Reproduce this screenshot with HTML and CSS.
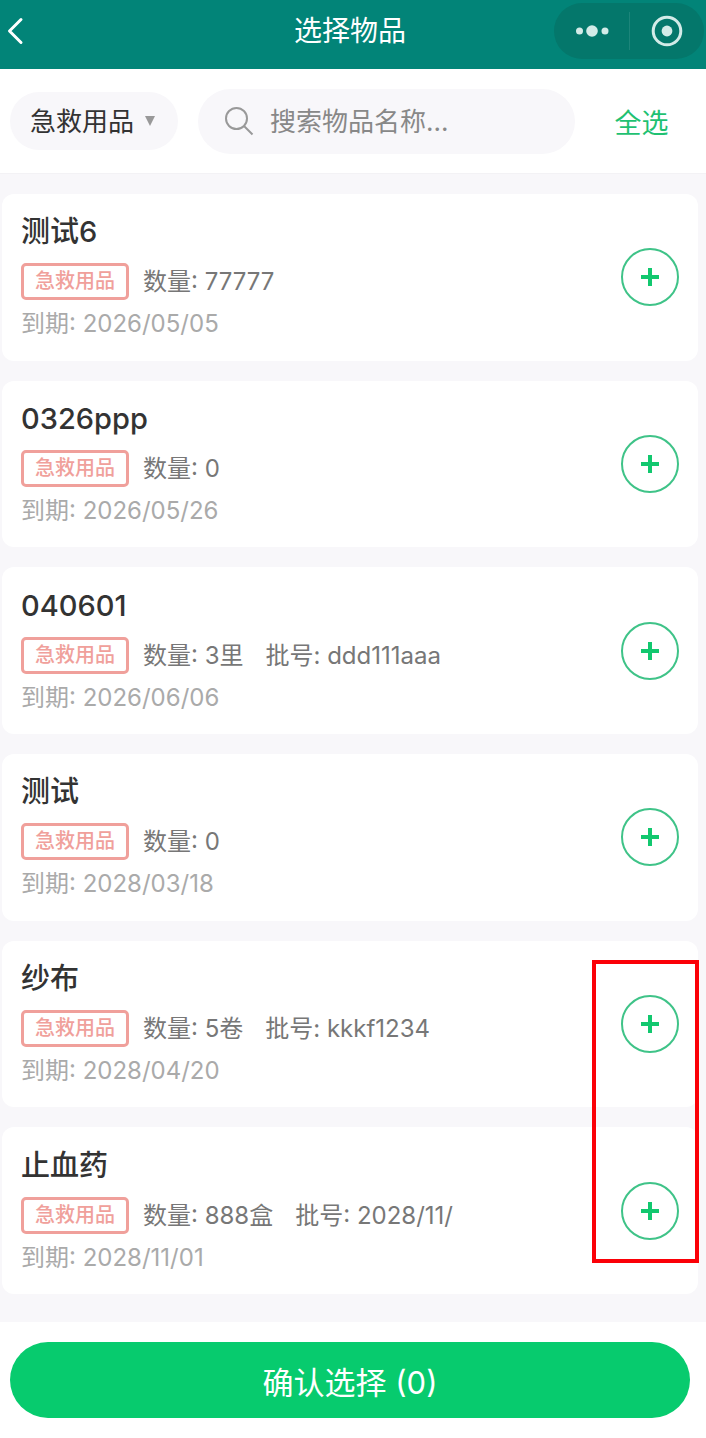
FILE: index.html
```html
<!DOCTYPE html>
<html lang="zh-CN">
<head>
    <meta charset="UTF-8">
    <meta name="viewport" content="width=device-width, initial-scale=1">
    <title>选择物品</title>
    <link rel="stylesheet" href="styles.css">
</head>
<body>
<div class="page">
    <header class="navbar">
        <button class="back" type="button" aria-label="返回">
            <svg width="18" height="30" viewBox="0 0 18 30"><path d="M15 3.5 3.5 15 15 26.5"/></svg>
        </button>
        <h1>选择物品</h1>
        <div class="capsule">
            <button type="button" aria-label="更多">
                <svg width="36" height="14" viewBox="0 0 36 14">
                    <circle cx="5.5" cy="7" r="3.5"/><circle cx="18" cy="7" r="5.8"/><circle cx="31" cy="7" r="3.5"/>
                </svg>
            </button>
            <button type="button" aria-label="关闭">
                <svg width="32" height="32" viewBox="0 0 32 32">
                    <circle class="ring" cx="16" cy="16" r="13.8"/><circle cx="16" cy="16" r="5.4"/>
                </svg>
            </button>
        </div>
    </header>

    <div class="filter">
        <div class="category">
            <select aria-label="分类">
                <option>急救用品</option>
            </select>
            <svg width="10" height="12" viewBox="0 0 10 12"><path d="M0 1h10L5 11z"/></svg>
        </div>
        <label class="search">
            <svg width="30" height="30" viewBox="0 0 30 30"><circle cx="12.5" cy="12.5" r="10.5"/><path d="M20 20l8.5 8.5"/></svg>
            <input type="text" placeholder="搜索物品名称..." aria-label="搜索物品名称">
        </label>
        <button class="all" type="button">全选</button>
    </div>

    <main class="list">
        <article class="card">
            <div class="info">
                <h2>测试6</h2>
                <p class="meta"><span class="tag">急救用品</span><span>数量: 77777</span></p>
                <p class="date">到期: 2026/05/05</p>
            </div>
            <button class="add" type="button" aria-label="添加"><svg width="18" height="18" viewBox="0 0 18 18"><path d="M9 0v18M0 9h18"/></svg></button>
        </article>
        <article class="card">
            <div class="info">
                <h2>0326ppp</h2>
                <p class="meta"><span class="tag">急救用品</span><span>数量: 0</span></p>
                <p class="date">到期: 2026/05/26</p>
            </div>
            <button class="add" type="button" aria-label="添加"><svg width="18" height="18" viewBox="0 0 18 18"><path d="M9 0v18M0 9h18"/></svg></button>
        </article>
        <article class="card">
            <div class="info">
                <h2>040601</h2>
                <p class="meta"><span class="tag">急救用品</span><span>数量: 3里</span><span class="batch">批号: ddd111aaa</span></p>
                <p class="date">到期: 2026/06/06</p>
            </div>
            <button class="add" type="button" aria-label="添加"><svg width="18" height="18" viewBox="0 0 18 18"><path d="M9 0v18M0 9h18"/></svg></button>
        </article>
        <article class="card">
            <div class="info">
                <h2>测试</h2>
                <p class="meta"><span class="tag">急救用品</span><span>数量: 0</span></p>
                <p class="date">到期: 2028/03/18</p>
            </div>
            <button class="add" type="button" aria-label="添加"><svg width="18" height="18" viewBox="0 0 18 18"><path d="M9 0v18M0 9h18"/></svg></button>
        </article>
        <article class="card">
            <div class="info">
                <h2>纱布</h2>
                <p class="meta"><span class="tag">急救用品</span><span>数量: 5卷</span><span class="batch">批号: kkkf1234</span></p>
                <p class="date">到期: 2028/04/20</p>
            </div>
            <button class="add" type="button" aria-label="添加"><svg width="18" height="18" viewBox="0 0 18 18"><path d="M9 0v18M0 9h18"/></svg></button>
        </article>
        <article class="card">
            <div class="info">
                <h2>止血药</h2>
                <p class="meta"><span class="tag">急救用品</span><span>数量: 888盒</span><span class="batch">批号: 2028/11/</span></p>
                <p class="date">到期: 2028/11/01</p>
            </div>
            <button class="add" type="button" aria-label="添加"><svg width="18" height="18" viewBox="0 0 18 18"><path d="M9 0v18M0 9h18"/></svg></button>
        </article>
        <div class="mark"></div>
    </main>

    <footer class="bottom">
        <button class="confirm" type="button">确认选择 (0)</button>
    </footer>
</div>
</body>
</html>
```
FILE: styles.css
```css
* {
    box-sizing: border-box;
}

body {
    margin: 0;
    font-family: Inter, "Noto Sans CJK SC", sans-serif;
    color: #333;
    background: #f8f7fa;
}

h1, h2, p {
    margin: 0;
}

button, input, select {
    font: inherit;
    color: inherit;
    border: 0;
    padding: 0;
    margin: 0;
    background: none;
}

svg {
    display: block;
}

.page {
    display: flex;
    flex-direction: column;
    min-height: 100vh;
}

/* top bar */
.navbar {
    display: grid;
    grid-template-columns: 1fr auto 1fr;
    align-items: center;
    height: 69px;
    padding: 0 2px 8px 6px;
    background: #028478;
    color: #fff;
}

.navbar h1 {
    padding-right: 10px;
    font-size: 28px;
    font-weight: 400;
    line-height: 40px;
}

.back {
    justify-self: start;
}

.back path {
    fill: none;
    stroke: #fff;
    stroke-width: 3;
    stroke-linecap: round;
    stroke-linejoin: round;
}

.capsule {
    justify-self: end;
    display: flex;
    width: 150px;
    height: 56px;
    border-radius: 28px;
    background: #04776b;
}

.capsule button {
    display: flex;
    flex: 1;
    align-items: center;
    justify-content: center;
    position: relative;
}

.capsule button + button::before {
    content: "";
    position: absolute;
    left: 0;
    top: 9px;
    width: 1px;
    height: 38px;
    background: #1c857a;
}

.capsule circle {
    fill: #d3ebe8;
}

.capsule .ring {
    fill: none;
    stroke: #d3ebe8;
    stroke-width: 3;
}

/* filter row */
.filter {
    display: flex;
    align-items: center;
    gap: 20px;
    height: 105px;
    padding: 0 18px 0 10px;
    background: #fff;
    border-bottom: 1px solid #f3f2f5;
}

.category {
    display: flex;
    flex: none;
    align-items: center;
    position: relative;
    width: 168px;
    height: 58px;
    border-radius: 29px;
    background: #f8f7fa;
}

.category select {
    appearance: none;
    width: 100%;
    height: 100%;
    padding-left: 20px;
    font-size: 26px;
}

.category svg {
    position: absolute;
    right: 23px;
    fill: #999;
    pointer-events: none;
}

.search {
    display: flex;
    flex: 1;
    align-items: center;
    gap: 16px;
    min-width: 0;
    height: 65px;
    padding: 0 26px;
    border-radius: 33px;
    background: #f8f7fa;
}

.search svg {
    flex: none;
    fill: none;
    stroke: #999;
    stroke-width: 2;
}

.search input {
    flex: 1;
    min-width: 0;
    font-size: 26px;
}

.search input::placeholder {
    color: #888;
    opacity: 1;
}

.all {
    flex: none;
    width: 93px;
    font-size: 27px;
    color: #1fc172;
}

/* item list */
.list {
    display: grid;
    flex: 1;
    grid-auto-rows: 1fr;
    gap: 20px;
    position: relative;
    padding: 20px 8px 28px 2px;
}

.card {
    display: flex;
    align-items: center;
    justify-content: space-between;
    padding: 0 19px;
    border-radius: 12px;
    background: #fff;
}

.card h2 {
    margin-bottom: 12px;
    font-size: 29px;
    font-weight: 500;
    line-height: 38px;
}

.meta {
    display: flex;
    align-items: center;
    margin-bottom: 7px;
    font-size: 24px;
    line-height: 37px;
    color: #777;
}

.tag {
    height: 37px;
    margin-right: 14px;
    padding: 0 11px;
    border: 3px solid #f0a09b;
    border-radius: 5px;
    font-size: 20px;
    font-weight: 500;
    line-height: 31px;
    color: #f0a09b;
}

.batch {
    margin-left: 22px;
}

.date {
    font-size: 24px;
    line-height: 34px;
    color: #aaa;
}

.add {
    display: flex;
    flex: none;
    align-items: center;
    justify-content: center;
    width: 58px;
    height: 58px;
    border: 2px solid #3fc388;
    border-radius: 50%;
}

.add path {
    stroke: #12c86f;
    stroke-width: 4;
}

/* frame around the last two add buttons */
.mark {
    position: absolute;
    right: 7px;
    bottom: 59px;
    width: 107px;
    height: 303px;
    border: 4px solid #fb0007;
    pointer-events: none;
}

/* bottom bar */
.bottom {
    padding: 20px 16px 20px 10px;
    background: #fff;
}

.confirm {
    display: block;
    width: 100%;
    height: 76px;
    border-radius: 38px;
    background: #07cb6e;
    color: #fff;
    font-size: 31px;
}
```
